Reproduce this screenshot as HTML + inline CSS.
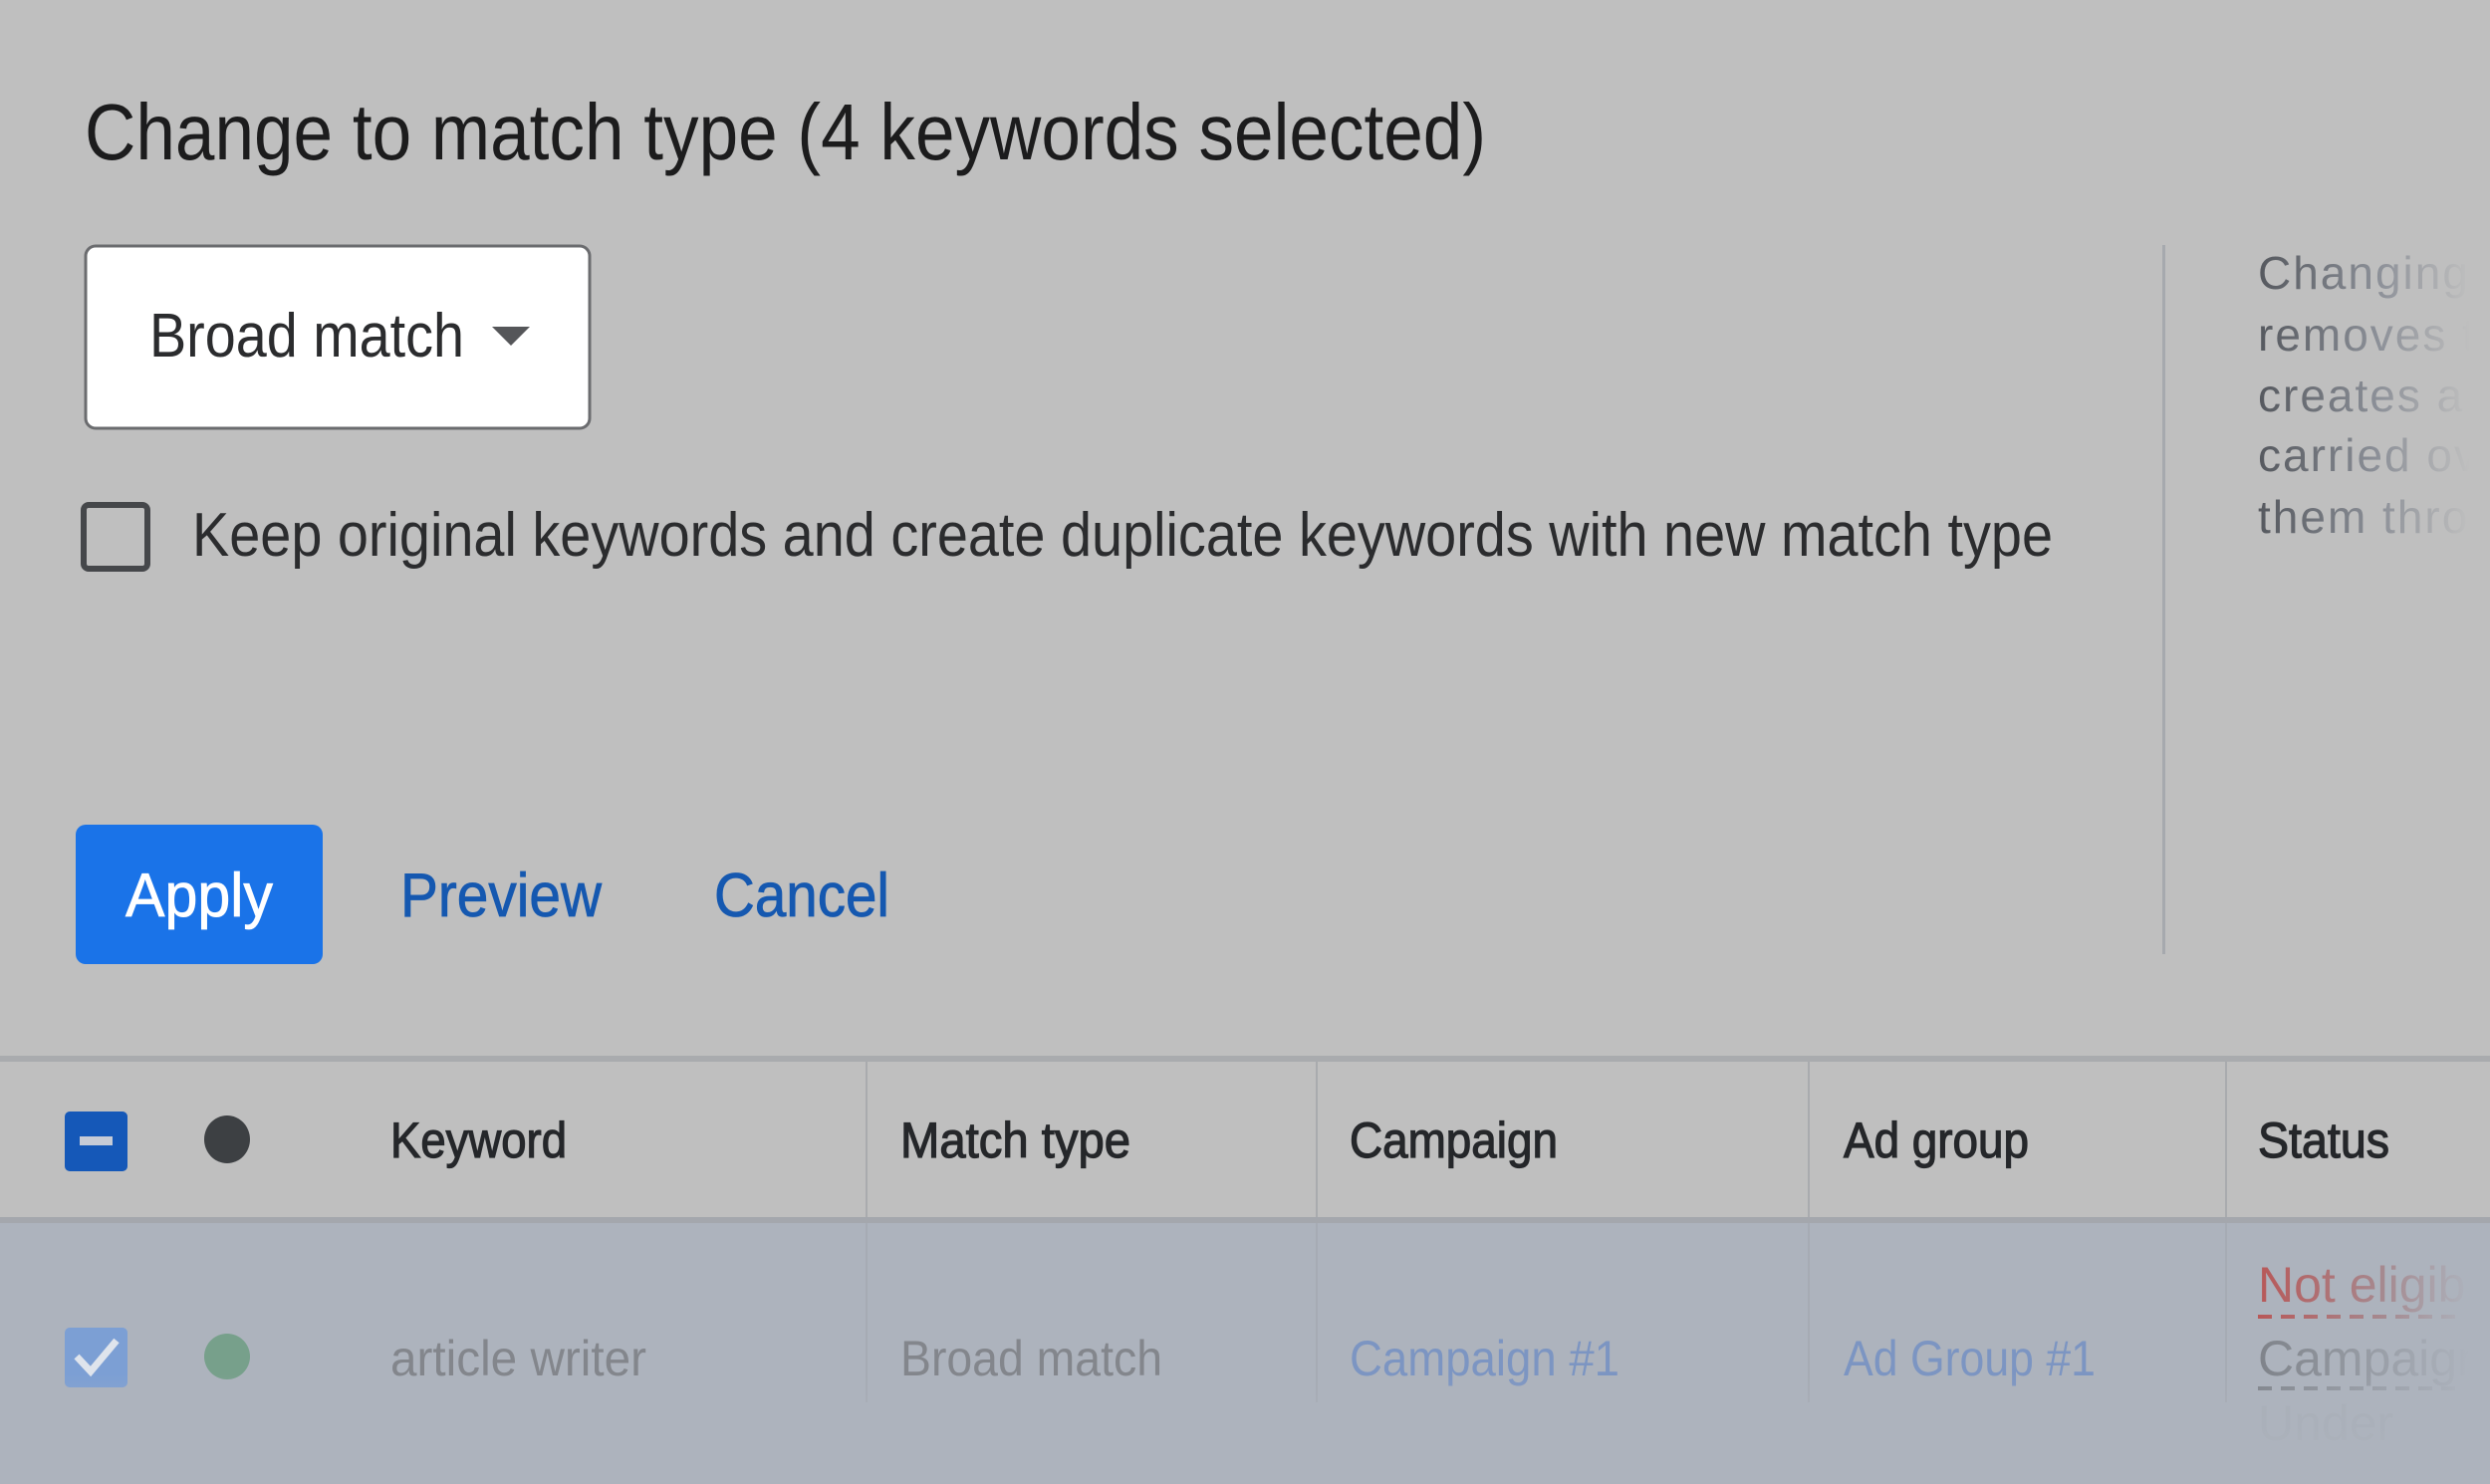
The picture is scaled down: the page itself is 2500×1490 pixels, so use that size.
<!DOCTYPE html>
<html><head><meta charset="utf-8"><style>html,body{margin:0;padding:0;background:#bfbfbf;overflow:hidden}svg{display:block}text{font-family:"Liberation Sans",Arial,sans-serif}</style></head>
<body>
<svg width="2500" height="1490" viewBox="0 0 2500 1490" xmlns="http://www.w3.org/2000/svg">
<defs>
<linearGradient id="fadeR" x1="2267" x2="2480" y1="0" y2="0" gradientUnits="userSpaceOnUse">
<stop offset="0" stop-color="#55585e"/><stop offset="0.55" stop-color="#8a8e96"/><stop offset="1" stop-color="#bfbfbf"/>
</linearGradient>
<linearGradient id="fadeR2" x1="2267" x2="2480" y1="0" y2="0" gradientUnits="userSpaceOnUse">
<stop offset="0" stop-color="#b85858"/><stop offset="0.6" stop-color="#a58a90"/><stop offset="1" stop-color="#adb3bd"/>
</linearGradient>
<linearGradient id="fadeR3" x1="2267" x2="2480" y1="0" y2="0" gradientUnits="userSpaceOnUse">
<stop offset="0" stop-color="#7f838a"/><stop offset="1" stop-color="#adb3bd"/>
</linearGradient>
<linearGradient id="fadeB" x1="0" x2="0" y1="1380" y2="1490" gradientUnits="userSpaceOnUse">
<stop offset="0" stop-color="#adb3bd" stop-opacity="0"/><stop offset="1" stop-color="#adb3bd" stop-opacity="1"/>
</linearGradient>
</defs>
<rect width="2500" height="1490" fill="#bfbfbf"/>
<text x="85" y="160" font-size="80" fill="#1c1c1d" textLength="1407" lengthAdjust="spacingAndGlyphs">Change to match type (4 keywords selected)</text>
<rect x="86" y="247" width="506" height="183" rx="10" fill="#fff" stroke="#6b6c6f" stroke-width="3"/>
<text x="150" y="358" font-size="62" fill="#2b2c2e" textLength="316" lengthAdjust="spacingAndGlyphs">Broad match</text>
<path d="M494 328 L532 328 L513 347 Z" fill="#555659"/>
<rect x="84" y="507" width="64" height="64" rx="5" fill="none" stroke="#45474a" stroke-width="6"/>
<text x="193" y="558" font-size="62" fill="#2b2c2e" textLength="1868" lengthAdjust="spacingAndGlyphs">Keep original keywords and create duplicate keywords with new match type</text>
<rect x="76" y="828" width="248" height="140" rx="10" fill="#1a73e8"/>
<text x="126" y="920" font-size="62" fill="#fff" stroke="#fff" stroke-width="0.8" textLength="148" lengthAdjust="spacingAndGlyphs">Apply</text>
<text x="402" y="920" font-size="62" fill="#1558b0" stroke="#1558b0" stroke-width="0.8" textLength="202" lengthAdjust="spacingAndGlyphs">Preview</text>
<text x="717" y="920" font-size="62" fill="#1558b0" stroke="#1558b0" stroke-width="0.8" textLength="176" lengthAdjust="spacingAndGlyphs">Cancel</text>
<rect x="2171" y="246" width="3" height="712" fill="#a6a9ae"/>
<g font-size="46" fill="url(#fadeR)">
<text x="2267" y="290" letter-spacing="2">Changing t</text>
<text x="2267" y="352" letter-spacing="2">removes t</text>
<text x="2267" y="413" letter-spacing="2">creates a</text>
<text x="2267" y="473" letter-spacing="2">carried ov</text>
<text x="2267" y="535" letter-spacing="2">them thro</text>
</g>
<rect x="0" y="1060" width="2500" height="6" fill="#a9abae"/>
<rect x="0" y="1066" width="2500" height="156" fill="#bfbfbf"/>
<rect x="0" y="1222" width="2500" height="6" fill="#a4a7ad"/>
<rect x="0" y="1228" width="2500" height="262" fill="#adb3bd"/>
<g fill="#a9abae"><rect x="869" y="1066" width="2" height="156"/><rect x="1321" y="1066" width="2" height="156"/><rect x="1815" y="1066" width="2" height="156"/><rect x="2234" y="1066" width="2" height="156"/></g>
<g fill="#a6abb4"><rect x="869" y="1228" width="2" height="180"/><rect x="1321" y="1228" width="2" height="180"/><rect x="1815" y="1228" width="2" height="180"/><rect x="2234" y="1228" width="2" height="180"/></g>
<rect x="65" y="1116" width="63" height="60" rx="5" fill="#1558b8"/>
<rect x="80" y="1141" width="33" height="9" fill="#c6cbd6"/>
<ellipse cx="228" cy="1144" rx="23" ry="24" fill="#3d4043"/>
<g font-size="50" fill="#25272a" stroke="#25272a" stroke-width="1.2">
<text x="392" y="1162" textLength="177" lengthAdjust="spacingAndGlyphs">Keyword</text>
<text x="904" y="1162" textLength="231" lengthAdjust="spacingAndGlyphs">Match type</text>
<text x="1355" y="1162" textLength="209" lengthAdjust="spacingAndGlyphs">Campaign</text>
<text x="1851" y="1162" textLength="186" lengthAdjust="spacingAndGlyphs">Ad group</text>
<text x="2267" y="1162" textLength="132" lengthAdjust="spacingAndGlyphs">Status</text>
</g>
<rect x="65" y="1333" width="63" height="60" rx="5" fill="#7c9fd4"/>
<path d="M77 1362 L91 1377 L117 1346" fill="none" stroke="#dfe4ec" stroke-width="7"/>
<ellipse cx="228" cy="1362" rx="23" ry="23" fill="#77a08b"/>
<g font-size="50">
<text x="392" y="1381" fill="#83868c" textLength="257" lengthAdjust="spacingAndGlyphs">article writer</text>
<text x="904" y="1381" fill="#83868c" textLength="263" lengthAdjust="spacingAndGlyphs">Broad match</text>
<text x="1355" y="1381" fill="#7c95c2" textLength="271" lengthAdjust="spacingAndGlyphs">Campaign #1</text>
<text x="1851" y="1381" fill="#7c95c2" textLength="253" lengthAdjust="spacingAndGlyphs">Ad Group #1</text>
<text x="2267" y="1307" fill="url(#fadeR2)">Not eligible</text>
<text x="2267" y="1381" fill="url(#fadeR3)">Campaign</text>
<text x="2267" y="1446" fill="#a8aeb7">Under</text>
</g>
<line x1="2267" y1="1322" x2="2470" y2="1322" stroke="url(#fadeR2)" stroke-width="4" stroke-dasharray="14 9"/>
<line x1="2267" y1="1394" x2="2470" y2="1394" stroke="url(#fadeR3)" stroke-width="4" stroke-dasharray="14 9"/>
<rect x="0" y="1380" width="2500" height="110" fill="url(#fadeB)"/>
</svg>
</body></html>
